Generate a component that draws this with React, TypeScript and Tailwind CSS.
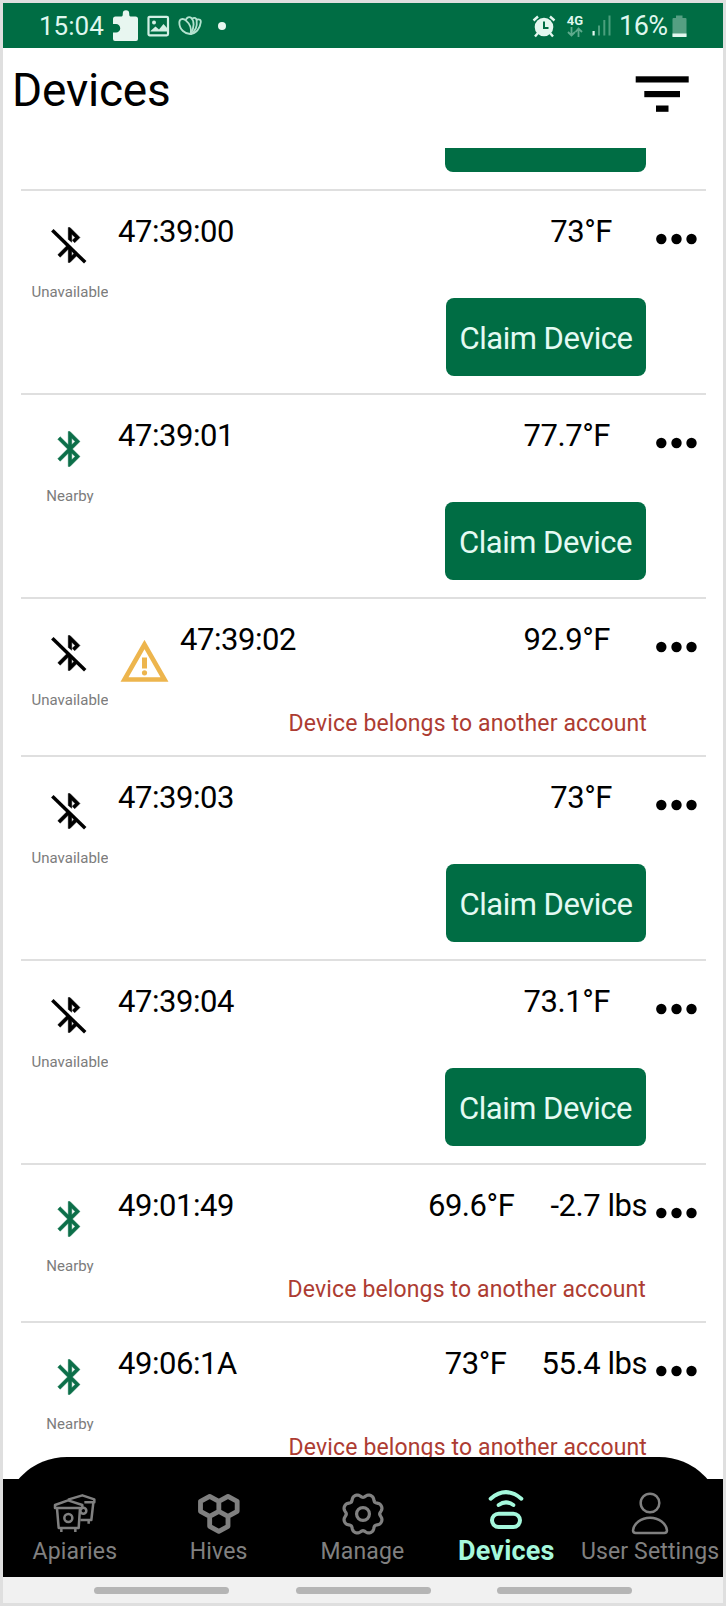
import React from "react";

type Device = {
  id: string;
  nearby?: boolean;
  warning?: boolean;
  temp: string;
  tempClass: string;
  weight?: string;
  claim?: string;
  messageClass?: string;
};

const devices: Device[] = [
  { id: "47:39:00", temp: "73°F", tempClass: "mr-[34px]", claim: "w-[200px]" },
  { id: "47:39:01", nearby: true, temp: "77.7°F", tempClass: "mr-[36px]", claim: "w-[201px]" },
  { id: "47:39:02", warning: true, temp: "92.9°F", tempClass: "mr-[36px]", messageClass: "-mr-px" },
  { id: "47:39:03", temp: "73°F", tempClass: "mr-[34px]", claim: "w-[200px]" },
  { id: "47:39:04", temp: "73.1°F", tempClass: "mr-[36px]", claim: "w-[201px]" },
  { id: "49:01:49", nearby: true, temp: "69.6°F", tempClass: "mr-[36px]", weight: "-2.7 lbs", messageClass: "mr-0" },
  { id: "49:06:1A", nearby: true, temp: "73°F", tempClass: "mr-[35px]", weight: "55.4 lbs", messageClass: "-mr-px" },
];

function StatusBar() {
  return (
    <div className="flex h-[45px] shrink-0 items-center bg-[#006d44] pl-[36px] text-[#dff7ee]">
      <span className="w-[74px] pt-[2px] text-[26px] leading-[43px]">15:04</span>
      <svg className="h-[32px] w-[26px]" viewBox="0 0 26 32" fill="#e8f6f0">
        <path d="M2.500 6.500H8.500C9.500 6.500 9.800 5.500 9.800 3.500a3.200 3.200 0 0 1 6.400 0C16.200 5.500 16.500 6.500 17.500 6.500H22.500a2.500 2.500 0 0 1 2.500 2.500V29a2 2 0 0 1-2 2H2a2 2 0 0 1-2-2V22.500H3a4.200 4.200 0 0 0 0-8.500H0V9A2.500 2.500 0 0 1 2.500 6.500z" />
      </svg>
      <svg className="ml-2 h-[22px] w-[23px]" viewBox="0 0 23 22" fill="none">
        <rect x="1.500" y="1.800" width="19.500" height="18.500" rx="1.200" stroke="#d3efe4" strokeWidth="2.200" />
        <circle cx="7" cy="7.500" r="2" fill="#d3efe4" />
        <path d="M3.500 16l5-4.500 3.500 3 4.500-5.500 4 4.500V16.500H3.500z" fill="#d3efe4" />
      </svg>
      <svg className="ml-[8px] h-[20px] w-[24px]" viewBox="0 0 72 60" fill="none" stroke="#b3e2cf" strokeWidth="5.500">
        <path d="M38 54C22 55 4 40 4 20 4 8 16 6 24 14 36 24 41 40 38 54z" />
        <path d="M23 13C26 4 34 1 39 5 49 14 50 34 38 54" />
        <path d="M42 8C50 3 56 6 56 14 58 30 52 46 38 54" />
        <path d="M56 11C64 8 70 12 68 20 66 38 54 53 38 54" />
      </svg>
      <span className="ml-[16px] size-2 rounded-full bg-[#e8f6f0]" />
      <svg className="ml-[306px] h-[24px] w-[24px]" viewBox="0 0 24 24" fill="none">
        <circle cx="12" cy="13" r="9.300" fill="#e3f7ef" />
        <path d="M1.500 6.500L6 2.500M22.500 6.500L18 2.500" stroke="#e3f7ef" strokeWidth="2.400" />
        <path d="M6 19l-3 3.500M18 19l3 3.500" stroke="#e3f7ef" strokeWidth="2.400" />
        <path d="M12 7.500V14h4.500" stroke="#006d44" strokeWidth="2" />
      </svg>
      <div className="ml-[11px] flex w-4 flex-col items-center">
        <span className="text-[13px] leading-[13px] font-bold">4G</span>
        <svg className="h-[10px] w-4" viewBox="0 0 16 10" fill="none" stroke="#5fab8d" strokeWidth="1.800">
          <path d="M4.500 0v8.500M1 5l3.500 3.500L8 5M11.500 10V1.500M8.500 5l3-3.500L15 5" />
        </svg>
      </div>
      <svg className="ml-[9px] h-[21px] w-[19px]" viewBox="0 0 19 21">
        <rect x="0.500" y="16" width="2.200" height="4.500" fill="#e3f7ef" />
        <g fill="#4b9f7d">
          <rect x="6" y="10.500" width="2" height="10" />
          <rect x="11.300" y="5" width="2" height="15.500" />
          <rect x="16.500" y="0.500" width="2" height="20" />
        </g>
      </svg>
      <span className="ml-[8px] pt-[2px] text-[27px] leading-[43px] tracking-[-0.5px]">16%</span>
      <svg className="ml-1 h-[22px] w-[15px]" viewBox="0 0 15 22">
        <path d="M4 0.500h6.500V3H13.500a1 1 0 0 1 1 1V21.500H0.500V4a1 1 0 0 1 1-1H4z" fill="#559f82" />
        <rect x="0.500" y="18.500" width="14" height="3.500" fill="#e3f7ef" />
      </svg>
    </div>
  );
}

function Header() {
  return (
    <header className="flex h-[100px] shrink-0 items-start justify-between pt-[14px] pr-[34px] pl-[9px]">
      <h1 className="text-[46px] leading-[56px] tracking-[-0.2px]">Devices</h1>
      <svg className="mt-[14px] h-[37px] w-[54px]" viewBox="0 0 54 37">
        <rect x="0.700" y="0.300" width="53" height="6.200" />
        <rect x="9.300" y="15" width="35.700" height="6.200" />
        <rect x="21" y="29.500" width="12.500" height="6.300" />
      </svg>
    </header>
  );
}

function BluetoothIcon({ off }: { off?: boolean }) {
  return (
    <svg className="h-[42px] w-[42px]" viewBox="0 0 24 24" strokeWidth="0.25">
      {off ? (
        <g stroke="#000">
          <path d="M11 8.800V2h1l5.710 5.710-3.020 3.020-1.410-1.410 1.600-1.600L13 5.830v4.600z" />
          <path d="M11 12.500V22h1l4.700-4.700-1.500-1.500L13 18.170V14.400zM11 11.600L5 17.590 6.410 19 12.400 13z" />
          <path d="M1.900 3.600L20.700 21.900" strokeWidth="2" />
        </g>
      ) : (
        <path
          fill="#0c6f49"
          stroke="#0c6f49"
          d="M17.710 7.710L12 2h-1v7.590L6.410 5 5 6.410 10.590 12 5 17.590 6.410 19 11 14.410V22h1l5.710-5.710-4.300-4.290 4.300-4.290zM13 5.830l1.880 1.880L13 9.590V5.830zm1.880 10.460L13 18.170v-3.760l1.880 1.880z"
        />
      )}
    </svg>
  );
}

function WarningIcon() {
  return (
    <svg className="mt-[41px] mr-[11px] ml-[2px] h-[42px] w-[49px] shrink-0" viewBox="0 0 49 42">
      <path d="M24.500 4.500L4.500 39.500H44.500z" fill="none" stroke="#edb54d" strokeWidth="4.600" />
      <rect x="22" y="17.500" width="5" height="11" fill="#edb54d" />
      <circle cx="24.500" cy="32.800" r="2.600" fill="#edb54d" />
    </svg>
  );
}

function ClaimButton({ width }: { width: string }) {
  return (
    <button className={`${width} h-[78px] rounded-lg bg-[#006d44] pt-[3px] text-[31px] leading-[36px] tracking-[-0.5px] whitespace-nowrap text-[#e4faf3]`}>
      Claim Device
    </button>
  );
}

function DeviceRow({ device }: { device: Device }) {
  return (
    <div className={`mr-[17px] ml-[18px] flex shrink-0 border-t-2 border-[#dfdfdf] ${device.claim ? "h-[204px]" : "h-[158px]"}`}>
      <div className="flex w-[97px] shrink-0 flex-col items-center pt-[33px]">
        <BluetoothIcon off={!device.nearby} />
        <span className="mt-[16px] ml-px h-[17px] overflow-hidden text-[15px] leading-[20px] text-[#7c7c7c]">
          {device.nearby ? "Nearby" : "Unavailable"}
        </span>
      </div>
      {device.warning && <WarningIcon />}
      <div className="flex flex-1 flex-col items-end">
        <div className="flex w-full pt-[23px] text-[31px] leading-[36px] tracking-[-0.45px] whitespace-nowrap">
          <span className="flex-1">{device.id}</span>
          <span className={device.tempClass}>{device.temp}</span>
          {device.weight && <span className="-mr-px">{device.weight}</span>}
        </div>
        {device.claim ? (
          <div className="mt-12 flex">
            <ClaimButton width={device.claim} />
          </div>
        ) : (
          <p className={`mt-[52px] text-[23px] leading-[28px] tracking-[0.14px] whitespace-nowrap text-[#ad3c32] ${device.messageClass}`}>
            Device belongs to another account
          </p>
        )}
      </div>
      <svg className="mt-[42px] mr-[9px] ml-[9px] h-[12px] w-[42px] shrink-0" viewBox="0 0 42 12">
        <circle cx="6.300" cy="6" r="5.200" />
        <circle cx="21.500" cy="6" r="5.200" />
        <circle cx="36.500" cy="6" r="5.200" />
      </svg>
    </div>
  );
}

function ApiariesIcon() {
  return (
    <svg className="h-[42px] w-[44px]" viewBox="0 0 132 126" fill="none" stroke="#808080" strokeWidth="7.500" strokeLinejoin="round">
      <path d="M45 23L88 10 124 22V31H94M121 32L115 84H82M107 84V95" />
      <circle cx="91" cy="56" r="9" />
      <path d="M45 25L6 39V48H88V39zM12 49L17 108H77L81 49M25 109V120M67 109V120" fill="#000" />
      <circle cx="46" cy="78" r="12" />
    </svg>
  );
}

function HivesIcon() {
  return (
    <svg className="h-[42px] w-[44px]" viewBox="0 0 132 126" fill="none" stroke="#808080" strokeWidth="14.500" strokeLinejoin="round">
      <path d="M38 10L65.500 25V55L38 70 10.500 55V25zM93 10L120.500 25V55L93 70 65.500 55V25zM65.500 55L93 70V100L65.500 115 38 100V70z" />
    </svg>
  );
}

// Outline of an eight-lobed cog, sampled around its centre.
const cogPoints = Array.from({ length: 192 }, (_, i) => {
  const angle = (i / 192) * Math.PI * 2;
  const dip = (1 + Math.cos(8 * angle)) / 2;
  const radius = 10.9 - 1.8 * Math.pow(dip, 1.5);
  return `${(12 + radius * Math.cos(angle)).toFixed(2)},${(12 + radius * Math.sin(angle)).toFixed(2)}`;
}).join(" ");

function ManageIcon() {
  return (
    <svg className="ml-px h-[44px] w-[44px]" viewBox="0 0 24 24" fill="none" stroke="#808080" strokeWidth="1.750" strokeLinejoin="round">
      <polygon points={cogPoints} />
      <circle cx="12" cy="12" r="3.500" />
    </svg>
  );
}

function DevicesIcon() {
  return (
    <svg className="h-[42px] w-[36px]" viewBox="0 0 108 126" fill="none" stroke="#a5f8dc" strokeWidth="12" strokeLinecap="round">
      <path d="M8 29Q54-10 100 29M32 48Q54 32 76 48" />
      <rect x="12" y="74" width="84" height="40" rx="20" />
    </svg>
  );
}

function UserIcon() {
  return (
    <svg className="h-[43px] w-[38px]" viewBox="0 0 114 129" fill="none" stroke="#808080" strokeWidth="7.500" strokeLinejoin="round">
      <circle cx="57" cy="33" r="28" />
      <path d="M57 77C30 77 8 95 6 115Q6 123 14 123H100Q108 123 108 115C106 95 84 77 57 77z" />
    </svg>
  );
}

const tabs = [
  { label: "Apiaries", icon: <ApiariesIcon />, pad: "pb-1" },
  { label: "Hives", icon: <HivesIcon />, pad: "pb-[3px]" },
  { label: "Manage", icon: <ManageIcon />, pad: "pb-[2px]" },
  { label: "Devices", icon: <DevicesIcon />, pad: "pb-[7px]", active: true },
  { label: "User Settings", icon: <UserIcon />, pad: "pb-[3px]" },
];

function TabBar() {
  return (
    <nav className="grid h-[98px] shrink-0 grid-cols-5 bg-black pr-px">
      {tabs.map((tab) => (
        <div key={tab.label} className="flex flex-col items-center">
          <div className={`flex h-[59px] shrink-0 items-end justify-center ${tab.pad}`}>{tab.icon}</div>
          <span
            className={
              tab.active
                ? "text-[27px] leading-[26px] font-bold tracking-[0.2px] text-[#a5f8dc]"
                : "text-[23px] leading-[28px] tracking-[0.15px] whitespace-nowrap text-[#808080]"
            }
          >
            {tab.label}
          </span>
        </div>
      ))}
    </nav>
  );
}

export default function App() {
  return (
    <div className="flex h-[1606px] w-[726px] flex-col overflow-hidden border-[3px] border-[#dfdfdf] bg-white font-['Roboto',sans-serif] text-black">
      <StatusBar />
      <Header />
      <main className="flex h-[1309px] shrink-0 flex-col overflow-hidden">
        <div className="flex h-[41px] shrink-0 justify-end pr-[77px]">
          <div className="h-6 w-[201px] rounded-b-lg bg-[#006d44]" />
        </div>
        {devices.map((device) => (
          <DeviceRow key={device.id} device={device} />
        ))}
      </main>
      <div className="h-[22px] shrink-0 overflow-hidden">
        <div className="h-32 rounded-t-[64px] bg-black" />
      </div>
      <TabBar />
      <div className="flex h-[26px] shrink-0 items-center justify-between bg-[#f1f1f1] pr-[91px] pl-[91px]">
        <span className="h-[7px] w-[135px] rounded-full bg-[#b5b5b5]" />
        <span className="h-[7px] w-[135px] rounded-full bg-[#b5b5b5]" />
        <span className="h-[7px] w-[135px] rounded-full bg-[#b5b5b5]" />
      </div>
    </div>
  );
}
